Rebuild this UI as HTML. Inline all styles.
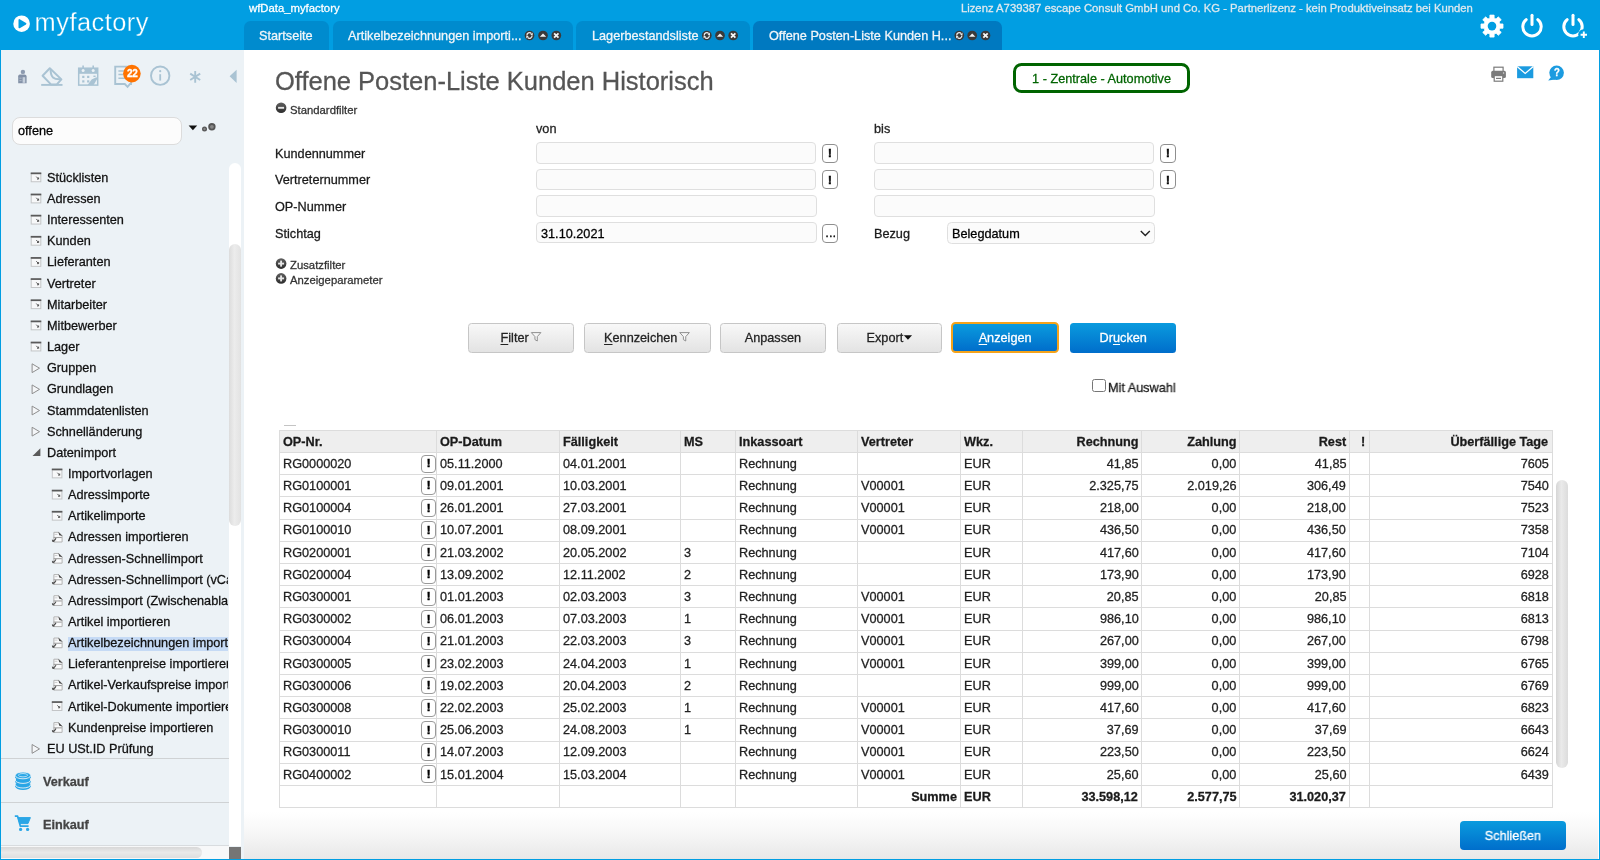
<!DOCTYPE html>
<html lang="de"><head><meta charset="utf-8"><title>myfactory</title>
<style>
html,body{margin:0;padding:0;}
body{width:1600px;height:860px;overflow:hidden;position:relative;background:#fff;font-family:"Liberation Sans",sans-serif;font-size:13px;color:#222;-webkit-text-stroke:0.28px;}
div,span{box-sizing:border-box;}
svg{position:absolute;overflow:visible;}
.gbtn{position:absolute;border:1px solid #c6c6c6;border-radius:3.5px;background:linear-gradient(#f8f8f8,#e3e3e3);text-align:center;color:#222;font-size:13px;}
.bbtn{position:absolute;border-radius:3.5px;background:linear-gradient(#0a9bde,#006ecb);text-align:center;color:#fff;font-size:13px;}
.ex{position:absolute;border:1px solid #8f8f8f;border-radius:4px;background:#fff;}
.inp{position:absolute;border:1px solid #dfdfdf;border-radius:4px;background:#fbfbfb;}
.sx{display:inline-block;transform:scaleX(0.976);}
u{text-decoration:underline;text-underline-offset:1.5px;}
</style></head><body><div id="root" style="position:absolute;left:0;top:0;width:1600px;height:860px;overflow:hidden;will-change:transform;">
<div style="position:absolute;left:0.00px;top:0.00px;width:1600.00px;height:49.60px;box-sizing:border-box;background:#019ee2;"></div>
<div style="position:absolute;left:0.00px;top:49.00px;width:1.30px;height:811.00px;box-sizing:border-box;background:#019ee2;"></div>
<div style="position:absolute;left:1598.60px;top:49.00px;width:1.40px;height:811.00px;box-sizing:border-box;background:#019ee2;"></div>
<svg style="left:0;top:0" width="60" height="50" viewBox="0 0 60 50"><circle cx="21.6" cy="23.7" r="8.3" fill="#fff"/><path d="M19.3 19.9 L19.3 27.5 L25.6 23.7 Z" fill="#019ee2" stroke="#019ee2" stroke-width="1.6" stroke-linejoin="round"/></svg>
<div style="position:absolute;top:5.00px;line-height:34px;font-size:25.4px;color:#fff;white-space:pre;left:34.60px;-webkit-text-stroke:0.3px #019ee2;letter-spacing:0.47px;">myfactory</div>
<div style="position:absolute;top:0.98px;line-height:14px;font-size:11.6px;color:#fff;white-space:pre;left:248.60px;transform:scaleX(0.976);transform-origin:left center;">wfData_myfactory</div>
<div style="position:absolute;top:0.98px;line-height:14px;font-size:11.6px;color:#dfe9ee;white-space:pre;right:126.70px;transform:scaleX(0.9735);transform-origin:right center;">Lizenz A739387 escape Consult GmbH und Co. KG - Partnerlizenz - kein Produktiveinsatz bei Kunden</div>
<div style="position:absolute;left:243.80px;top:21.00px;width:85.00px;height:28.60px;box-sizing:border-box;background:#008bce;border-radius:6.5px 6.5px 0 0;"></div>
<div style="position:absolute;top:27.50px;line-height:16px;font-size:13.0px;color:#f2f6f9;white-space:pre;left:259.30px;transform:scaleX(0.976);transform-origin:left center;">Startseite</div>
<div style="position:absolute;left:332.50px;top:21.00px;width:240.00px;height:28.60px;box-sizing:border-box;background:#008bce;border-radius:6.5px 6.5px 0 0;"></div>
<div style="position:absolute;top:27.50px;line-height:16px;font-size:13.0px;color:#f2f6f9;white-space:pre;left:347.90px;transform:scaleX(0.976);transform-origin:left center;">Artikelbezeichnungen importi...</div>
<div style="position:absolute;left:576.20px;top:21.00px;width:173.40px;height:28.60px;box-sizing:border-box;background:#008bce;border-radius:6.5px 6.5px 0 0;"></div>
<div style="position:absolute;top:27.50px;line-height:16px;font-size:13.0px;color:#f2f6f9;white-space:pre;left:591.90px;transform:scaleX(0.976);transform-origin:left center;">Lagerbestandsliste</div>
<div style="position:absolute;left:752.80px;top:21.00px;width:249.20px;height:28.60px;box-sizing:border-box;background:#0079c0;border-radius:6.5px 6.5px 0 0;"></div>
<div style="position:absolute;top:27.50px;line-height:16px;font-size:13.0px;color:#f2f6f9;white-space:pre;left:768.60px;transform:scaleX(0.976);transform-origin:left center;">Offene Posten-Liste Kunden H...</div>
<svg style="left:0;top:0" width="1100" height="50" viewBox="0 0 1100 50"><circle cx="529.5" cy="35.5" r="4.85" fill="#3a3a3a"/><path d="M531.40 33.60 A2.5 2.5 0 0 0 527.00 35.60 M527.60 37.40 A2.5 2.5 0 0 0 532.00 35.40" stroke="#ededed" stroke-width="1.3" fill="none"/><path d="M532.70 32.40 v2.5 h-2.5z M526.30 38.60 v-2.5 h2.5z" fill="#ededed"/><circle cx="543.0" cy="35.5" r="4.85" fill="#3a3a3a"/><path d="M539.80 36.70 L543.00 33.50 L546.20 36.70 Z" fill="#f4f4f4"/><circle cx="556.3" cy="35.5" r="4.85" fill="#3a3a3a"/><path d="M554.10 33.30 L558.50 37.70 M558.50 33.30 L554.10 37.70" stroke="#f6f6f6" stroke-width="1.75" fill="none"/><circle cx="706.8" cy="35.5" r="4.85" fill="#3a3a3a"/><path d="M708.70 33.60 A2.5 2.5 0 0 0 704.30 35.60 M704.90 37.40 A2.5 2.5 0 0 0 709.30 35.40" stroke="#ededed" stroke-width="1.3" fill="none"/><path d="M710.00 32.40 v2.5 h-2.5z M703.60 38.60 v-2.5 h2.5z" fill="#ededed"/><circle cx="720.0" cy="35.5" r="4.85" fill="#3a3a3a"/><path d="M716.80 36.70 L720.00 33.50 L723.20 36.70 Z" fill="#f4f4f4"/><circle cx="733.2" cy="35.5" r="4.85" fill="#3a3a3a"/><path d="M731.00 33.30 L735.40 37.70 M735.40 33.30 L731.00 37.70" stroke="#f6f6f6" stroke-width="1.75" fill="none"/><circle cx="959.3" cy="35.5" r="4.85" fill="#3a3a3a"/><path d="M961.20 33.60 A2.5 2.5 0 0 0 956.80 35.60 M957.40 37.40 A2.5 2.5 0 0 0 961.80 35.40" stroke="#ededed" stroke-width="1.3" fill="none"/><path d="M962.50 32.40 v2.5 h-2.5z M956.10 38.60 v-2.5 h2.5z" fill="#ededed"/><circle cx="972.2" cy="35.5" r="4.85" fill="#3a3a3a"/><path d="M969.00 36.70 L972.20 33.50 L975.40 36.70 Z" fill="#f4f4f4"/><circle cx="985.5" cy="35.5" r="4.85" fill="#3a3a3a"/><path d="M983.30 33.30 L987.70 37.70 M987.70 33.30 L983.30 37.70" stroke="#f6f6f6" stroke-width="1.75" fill="none"/></svg>
<svg style="left:0;top:0" width="1600" height="50" viewBox="0 0 1600 50"><g transform="translate(1492,26.1)"><polygon points="-2.12,-11.00 2.12,-11.00 2.11,-7.92 4.11,-7.09 6.28,-9.27 9.27,-6.28 7.09,-4.11 7.92,-2.11 11.00,-2.12 11.00,2.12 7.92,2.11 7.09,4.11 9.27,6.28 6.28,9.27 4.11,7.09 2.11,7.92 2.12,11.00 -2.12,11.00 -2.11,7.92 -4.11,7.09 -6.28,9.27 -9.27,6.28 -7.09,4.11 -7.92,2.11 -11.00,2.12 -11.00,-2.12 -7.92,-2.11 -7.09,-4.11 -9.27,-6.28 -6.28,-9.27 -4.11,-7.09 -2.11,-7.92" fill="#fff" stroke="#fff" stroke-width="0.8" stroke-linejoin="round"/><circle r="4.3" fill="#019ee2"/></g><g fill="none" stroke="#fff" stroke-width="3" stroke-linecap="round"><path d="M1526.2 19.6 A9.2 9.2 0 1 0 1537.8 19.6"/><path d="M1532 15.2 V24.6"/><path d="M1567.2 19.6 A9.2 9.2 0 1 0 1578.8 19.6" /><path d="M1573 15.2 V24.6"/></g><circle cx="1583.6" cy="34.6" r="5.4" fill="#019ee2"/><path d="M1580.6 34.8 H1587 M1583.8 31.6 V38" stroke="#fff" stroke-width="1.9" fill="none"/></svg>
<div style="position:absolute;left:1.30px;top:49.60px;width:242.30px;height:809.40px;box-sizing:border-box;background:#ecf2f6;"></div>
<svg style="left:0;top:0" width="244" height="100" viewBox="0 0 244 100"><g><circle cx="22.9" cy="71.9" r="2.2" fill="#8d9bb0"/><path d="M18.2 76.2 q0 -1.6 1.6 -1.6 h4.6 q2.2 0 2.2 2 v6.6 h-8.4z" fill="#8391a7"/><rect x="22.6" y="77.2" width="2.6" height="5.6" fill="#c6d0dc"/><rect x="19.4" y="77.6" width="2.2" height="1.2" fill="#aab5c5"/><rect x="19.4" y="80" width="2.2" height="1.2" fill="#aab5c5"/></g><g fill="none" stroke="#a9c3d3" stroke-width="2" stroke-linejoin="round"><path d="M49.8 68.2 L42.6 75.7 L51.2 84.6 H56.6 L61.4 79.4 Z"/><path d="M50.6 69.6 C50.6 77.2 53.6 79.6 60.6 79.2"/><path d="M41.2 84.9 H62.5" stroke-width="1.9"/></g><g><rect x="78.7" y="68.2" width="19" height="16.9" fill="none" stroke="#a9c3d3" stroke-width="1.5"/><rect x="78.7" y="68.2" width="19" height="5.6" fill="#a9c3d3"/><path d="M83.1 65.6 V70.4 M93.2 65.6 V70.4" stroke="#a9c3d3" stroke-width="1.6"/><circle cx="83.1" cy="70.6" r="1.5" fill="#ecf2f6"/><circle cx="93.2" cy="70.6" r="1.5" fill="#ecf2f6"/><rect x="82.2" y="75.80000000000001" width="2.2" height="2.2" fill="#a9c3d3"/><rect x="87.10000000000001" y="75.80000000000001" width="2.2" height="2.2" fill="#a9c3d3"/><rect x="82.2" y="80.30000000000001" width="2.2" height="2.2" fill="#a9c3d3"/><rect x="87.10000000000001" y="80.30000000000001" width="2.2" height="2.2" fill="#a9c3d3"/><path d="M93.4 76.3 h2.2" stroke="#a9c3d3" stroke-width="1.4"/><path d="M87.6 85.1 L91.6 79.4 L96.4 77.2 L97.6 78.2 L93.6 85.1 Z" fill="#a9c3d3"/></g><g><path d="M115.2 66.6 H131 V84 H130 L127.6 86.8 L124.8 84 H115.2 Z" fill="none" stroke="#a9c3d3" stroke-width="1.9"/><path d="M118.4 71 H128 M118.4 74.6 H128 M118.4 78.2 H128" stroke="#a9c3d3" stroke-width="1.5"/></g><circle cx="131.9" cy="73.6" r="8.8" fill="#ff7300"/><circle cx="160.2" cy="75.7" r="9.2" fill="none" stroke="#a9c3d3" stroke-width="1.9"/><circle cx="160.2" cy="71.2" r="1.1" fill="#a9c3d3"/><path d="M160.2 74.2 V80.6" stroke="#a9c3d3" stroke-width="1.8"/><path d="M195.2 70.9 V82.7 M190.2 73.6 L200.2 80 M200.2 73.6 L190.2 80" stroke="#a9c3d3" stroke-width="1.9" fill="none"/><path d="M236.6 69.8 V82.9 L229.6 76.3 Z" fill="#a9c3d3"/></svg>
<div style="position:absolute;top:67.77px;line-height:12px;font-size:10.2px;color:#fff;white-space:pre;font-weight:700;left:126.60px;transform:scaleX(0.976);transform-origin:left center;letter-spacing:-0.3px;">22</div>
<div style="position:absolute;left:12.20px;top:117.00px;width:169.40px;height:28.00px;box-sizing:border-box;background:#fcfcfc;border:1px solid #dcdcdc;border-radius:8px;"></div>
<div style="position:absolute;top:122.00px;line-height:17px;font-size:13.0px;color:#000;white-space:pre;left:18.00px;transform:scaleX(0.976);transform-origin:left center;">offene</div>
<svg style="left:0;top:100px" width="244" height="60" viewBox="0 100 244 60"><path d="M188.6 125.4 H197.2 L192.9 130.2 Z" fill="#111"/><circle cx="204.5" cy="129.0" r="2.5" fill="#555"/><circle cx="211.9" cy="126.8" r="3.7" fill="#555"/><circle cx="204.5" cy="129.0" r="1.2" fill="#888"/><circle cx="211.9" cy="126.8" r="1.9" fill="#888"/></svg>
<div style="position:absolute;left:0;top:160px;width:228.4px;height:598px;overflow:hidden;"><div style="position:absolute;left:0;top:-160px;"><div style="position:absolute;top:169.85px;line-height:16px;font-size:13.0px;color:#111;white-space:pre;left:46.80px;transform:scaleX(0.976);transform-origin:left center;">Stücklisten</div><div style="position:absolute;top:191.00px;line-height:16px;font-size:13.0px;color:#111;white-space:pre;left:46.80px;transform:scaleX(0.976);transform-origin:left center;">Adressen</div><div style="position:absolute;top:212.15px;line-height:16px;font-size:13.0px;color:#111;white-space:pre;left:46.80px;transform:scaleX(0.976);transform-origin:left center;">Interessenten</div><div style="position:absolute;top:233.30px;line-height:16px;font-size:13.0px;color:#111;white-space:pre;left:46.80px;transform:scaleX(0.976);transform-origin:left center;">Kunden</div><div style="position:absolute;top:254.45px;line-height:16px;font-size:13.0px;color:#111;white-space:pre;left:46.80px;transform:scaleX(0.976);transform-origin:left center;">Lieferanten</div><div style="position:absolute;top:275.60px;line-height:16px;font-size:13.0px;color:#111;white-space:pre;left:46.80px;transform:scaleX(0.976);transform-origin:left center;">Vertreter</div><div style="position:absolute;top:296.75px;line-height:16px;font-size:13.0px;color:#111;white-space:pre;left:46.80px;transform:scaleX(0.976);transform-origin:left center;">Mitarbeiter</div><div style="position:absolute;top:317.90px;line-height:16px;font-size:13.0px;color:#111;white-space:pre;left:46.80px;transform:scaleX(0.976);transform-origin:left center;">Mitbewerber</div><div style="position:absolute;top:339.05px;line-height:16px;font-size:13.0px;color:#111;white-space:pre;left:46.80px;transform:scaleX(0.976);transform-origin:left center;">Lager</div><div style="position:absolute;top:360.20px;line-height:16px;font-size:13.0px;color:#111;white-space:pre;left:46.80px;transform:scaleX(0.976);transform-origin:left center;">Gruppen</div><div style="position:absolute;top:381.35px;line-height:16px;font-size:13.0px;color:#111;white-space:pre;left:46.80px;transform:scaleX(0.976);transform-origin:left center;">Grundlagen</div><div style="position:absolute;top:402.50px;line-height:16px;font-size:13.0px;color:#111;white-space:pre;left:46.80px;transform:scaleX(0.976);transform-origin:left center;">Stammdatenlisten</div><div style="position:absolute;top:423.65px;line-height:16px;font-size:13.0px;color:#111;white-space:pre;left:46.80px;transform:scaleX(0.976);transform-origin:left center;">Schnelländerung</div><div style="position:absolute;top:444.80px;line-height:16px;font-size:13.0px;color:#111;white-space:pre;left:46.80px;transform:scaleX(0.976);transform-origin:left center;">Datenimport</div><div style="position:absolute;top:465.95px;line-height:16px;font-size:13.0px;color:#111;white-space:pre;left:67.80px;transform:scaleX(0.976);transform-origin:left center;">Importvorlagen</div><div style="position:absolute;top:487.10px;line-height:16px;font-size:13.0px;color:#111;white-space:pre;left:67.80px;transform:scaleX(0.976);transform-origin:left center;">Adressimporte</div><div style="position:absolute;top:508.25px;line-height:16px;font-size:13.0px;color:#111;white-space:pre;left:67.80px;transform:scaleX(0.976);transform-origin:left center;">Artikelimporte</div><div style="position:absolute;top:529.40px;line-height:16px;font-size:13.0px;color:#111;white-space:pre;left:67.80px;transform:scaleX(0.976);transform-origin:left center;">Adressen importieren</div><div style="position:absolute;top:550.55px;line-height:16px;font-size:13.0px;color:#111;white-space:pre;left:67.80px;transform:scaleX(0.976);transform-origin:left center;">Adressen-Schnellimport</div><div style="position:absolute;top:571.70px;line-height:16px;font-size:13.0px;color:#111;white-space:pre;left:67.80px;transform:scaleX(0.976);transform-origin:left center;">Adressen-Schnellimport (vCard)</div><div style="position:absolute;top:592.85px;line-height:16px;font-size:13.0px;color:#111;white-space:pre;left:67.80px;transform:scaleX(0.976);transform-origin:left center;">Adressimport (Zwischenablage)</div><div style="position:absolute;top:614.00px;line-height:16px;font-size:13.0px;color:#111;white-space:pre;left:67.80px;transform:scaleX(0.976);transform-origin:left center;">Artikel importieren</div><div style="position:absolute;left:67.90px;top:636.55px;width:160.70px;height:14.70px;box-sizing:border-box;background:#c5daf5;"></div><div style="position:absolute;top:635.15px;line-height:16px;font-size:13.0px;color:#111;white-space:pre;left:67.80px;transform:scaleX(0.976);transform-origin:left center;">Artikelbezeichnungen importieren</div><div style="position:absolute;top:656.30px;line-height:16px;font-size:13.0px;color:#111;white-space:pre;left:67.80px;transform:scaleX(0.976);transform-origin:left center;">Lieferantenpreise importieren</div><div style="position:absolute;top:677.45px;line-height:16px;font-size:13.0px;color:#111;white-space:pre;left:67.80px;transform:scaleX(0.976);transform-origin:left center;">Artikel-Verkaufspreise importieren</div><div style="position:absolute;top:698.60px;line-height:16px;font-size:13.0px;color:#111;white-space:pre;left:67.80px;transform:scaleX(0.976);transform-origin:left center;">Artikel-Dokumente importieren</div><div style="position:absolute;top:719.75px;line-height:16px;font-size:13.0px;color:#111;white-space:pre;left:67.80px;transform:scaleX(0.976);transform-origin:left center;">Kundenpreise importieren</div><div style="position:absolute;top:740.90px;line-height:16px;font-size:13.0px;color:#111;white-space:pre;left:46.80px;transform:scaleX(0.976);transform-origin:left center;">EU USt.ID Prüfung</div><svg style="left:0;top:160px" width="229" height="600" viewBox="0 160 229 600"><g transform="translate(30.70,172.45)"><rect x="0.5" y="1.3" width="9.6" height="8" fill="#f7f8f9" stroke="#c3c5c7" stroke-width="1"/><rect x="0" y="0" width="10.6" height="1.7" fill="#5a5a5a"/><path d="M5.6 4.2 L7.9 6.6 M7.9 6.6 V5 M7.9 6.6 H6.3" stroke="#555" stroke-width="1" fill="none"/></g><g transform="translate(30.70,193.60)"><rect x="0.5" y="1.3" width="9.6" height="8" fill="#f7f8f9" stroke="#c3c5c7" stroke-width="1"/><rect x="0" y="0" width="10.6" height="1.7" fill="#5a5a5a"/><path d="M5.6 4.2 L7.9 6.6 M7.9 6.6 V5 M7.9 6.6 H6.3" stroke="#555" stroke-width="1" fill="none"/></g><g transform="translate(30.70,214.75)"><rect x="0.5" y="1.3" width="9.6" height="8" fill="#f7f8f9" stroke="#c3c5c7" stroke-width="1"/><rect x="0" y="0" width="10.6" height="1.7" fill="#5a5a5a"/><path d="M5.6 4.2 L7.9 6.6 M7.9 6.6 V5 M7.9 6.6 H6.3" stroke="#555" stroke-width="1" fill="none"/></g><g transform="translate(30.70,235.90)"><rect x="0.5" y="1.3" width="9.6" height="8" fill="#f7f8f9" stroke="#c3c5c7" stroke-width="1"/><rect x="0" y="0" width="10.6" height="1.7" fill="#5a5a5a"/><path d="M5.6 4.2 L7.9 6.6 M7.9 6.6 V5 M7.9 6.6 H6.3" stroke="#555" stroke-width="1" fill="none"/></g><g transform="translate(30.70,257.05)"><rect x="0.5" y="1.3" width="9.6" height="8" fill="#f7f8f9" stroke="#c3c5c7" stroke-width="1"/><rect x="0" y="0" width="10.6" height="1.7" fill="#5a5a5a"/><path d="M5.6 4.2 L7.9 6.6 M7.9 6.6 V5 M7.9 6.6 H6.3" stroke="#555" stroke-width="1" fill="none"/></g><g transform="translate(30.70,278.20)"><rect x="0.5" y="1.3" width="9.6" height="8" fill="#f7f8f9" stroke="#c3c5c7" stroke-width="1"/><rect x="0" y="0" width="10.6" height="1.7" fill="#5a5a5a"/><path d="M5.6 4.2 L7.9 6.6 M7.9 6.6 V5 M7.9 6.6 H6.3" stroke="#555" stroke-width="1" fill="none"/></g><g transform="translate(30.70,299.35)"><rect x="0.5" y="1.3" width="9.6" height="8" fill="#f7f8f9" stroke="#c3c5c7" stroke-width="1"/><rect x="0" y="0" width="10.6" height="1.7" fill="#5a5a5a"/><path d="M5.6 4.2 L7.9 6.6 M7.9 6.6 V5 M7.9 6.6 H6.3" stroke="#555" stroke-width="1" fill="none"/></g><g transform="translate(30.70,320.50)"><rect x="0.5" y="1.3" width="9.6" height="8" fill="#f7f8f9" stroke="#c3c5c7" stroke-width="1"/><rect x="0" y="0" width="10.6" height="1.7" fill="#5a5a5a"/><path d="M5.6 4.2 L7.9 6.6 M7.9 6.6 V5 M7.9 6.6 H6.3" stroke="#555" stroke-width="1" fill="none"/></g><g transform="translate(30.70,341.65)"><rect x="0.5" y="1.3" width="9.6" height="8" fill="#f7f8f9" stroke="#c3c5c7" stroke-width="1"/><rect x="0" y="0" width="10.6" height="1.7" fill="#5a5a5a"/><path d="M5.6 4.2 L7.9 6.6 M7.9 6.6 V5 M7.9 6.6 H6.3" stroke="#555" stroke-width="1" fill="none"/></g><path d="M32.10 363.80 V372.60 L39.50 368.20 Z" fill="#f4f6f8" stroke="#8e8e8e" stroke-width="1" stroke-linejoin="round"/><path d="M32.10 384.95 V393.75 L39.50 389.35 Z" fill="#f4f6f8" stroke="#8e8e8e" stroke-width="1" stroke-linejoin="round"/><path d="M32.10 406.10 V414.90 L39.50 410.50 Z" fill="#f4f6f8" stroke="#8e8e8e" stroke-width="1" stroke-linejoin="round"/><path d="M32.10 427.25 V436.05 L39.50 431.65 Z" fill="#f4f6f8" stroke="#8e8e8e" stroke-width="1" stroke-linejoin="round"/><path d="M32.50 456.00 H40.40 V448.30 Z" fill="#5a5a5a"/><g transform="translate(51.80,468.55)"><rect x="0.5" y="1.3" width="9.6" height="8" fill="#f7f8f9" stroke="#c3c5c7" stroke-width="1"/><rect x="0" y="0" width="10.6" height="1.7" fill="#5a5a5a"/><path d="M5.6 4.2 L7.9 6.6 M7.9 6.6 V5 M7.9 6.6 H6.3" stroke="#555" stroke-width="1" fill="none"/></g><g transform="translate(51.80,489.70)"><rect x="0.5" y="1.3" width="9.6" height="8" fill="#f7f8f9" stroke="#c3c5c7" stroke-width="1"/><rect x="0" y="0" width="10.6" height="1.7" fill="#5a5a5a"/><path d="M5.6 4.2 L7.9 6.6 M7.9 6.6 V5 M7.9 6.6 H6.3" stroke="#555" stroke-width="1" fill="none"/></g><g transform="translate(51.80,510.85)"><rect x="0.5" y="1.3" width="9.6" height="8" fill="#f7f8f9" stroke="#c3c5c7" stroke-width="1"/><rect x="0" y="0" width="10.6" height="1.7" fill="#5a5a5a"/><path d="M5.6 4.2 L7.9 6.6 M7.9 6.6 V5 M7.9 6.6 H6.3" stroke="#555" stroke-width="1" fill="none"/></g><g transform="translate(52.00,531.40)"><path d="M1.9 0.9 H6.6 L10.1 4.4 V10.6 H1.9 Z" fill="#fafbfc" stroke="#b2b2b2" stroke-width="1"/><path d="M6.3 0.4 L10.6 4.7 L7.2 3.9 Z" fill="#4a4a4a"/><path d="M2.4 3 H5.4" stroke="#c8c8c8" stroke-width="0.9"/><path d="M1.6 6.1 H9.8" stroke="#a0a0a0" stroke-width="1.1"/><path d="M4 6.8 Q3.2 8.8 0.8 9.9" stroke="#4a4a4a" stroke-width="1.05" fill="none"/><path d="M0.4 8.3 L0.6 10.1 L2.4 10.2" stroke="#4a4a4a" fill="none" stroke-width="0.9"/></g><g transform="translate(52.00,552.55)"><path d="M1.9 0.9 H6.6 L10.1 4.4 V10.6 H1.9 Z" fill="#fafbfc" stroke="#b2b2b2" stroke-width="1"/><path d="M6.3 0.4 L10.6 4.7 L7.2 3.9 Z" fill="#4a4a4a"/><path d="M2.4 3 H5.4" stroke="#c8c8c8" stroke-width="0.9"/><path d="M1.6 6.1 H9.8" stroke="#a0a0a0" stroke-width="1.1"/><path d="M4 6.8 Q3.2 8.8 0.8 9.9" stroke="#4a4a4a" stroke-width="1.05" fill="none"/><path d="M0.4 8.3 L0.6 10.1 L2.4 10.2" stroke="#4a4a4a" fill="none" stroke-width="0.9"/></g><g transform="translate(52.00,573.70)"><path d="M1.9 0.9 H6.6 L10.1 4.4 V10.6 H1.9 Z" fill="#fafbfc" stroke="#b2b2b2" stroke-width="1"/><path d="M6.3 0.4 L10.6 4.7 L7.2 3.9 Z" fill="#4a4a4a"/><path d="M2.4 3 H5.4" stroke="#c8c8c8" stroke-width="0.9"/><path d="M1.6 6.1 H9.8" stroke="#a0a0a0" stroke-width="1.1"/><path d="M4 6.8 Q3.2 8.8 0.8 9.9" stroke="#4a4a4a" stroke-width="1.05" fill="none"/><path d="M0.4 8.3 L0.6 10.1 L2.4 10.2" stroke="#4a4a4a" fill="none" stroke-width="0.9"/></g><g transform="translate(52.00,594.85)"><path d="M1.9 0.9 H6.6 L10.1 4.4 V10.6 H1.9 Z" fill="#fafbfc" stroke="#b2b2b2" stroke-width="1"/><path d="M6.3 0.4 L10.6 4.7 L7.2 3.9 Z" fill="#4a4a4a"/><path d="M2.4 3 H5.4" stroke="#c8c8c8" stroke-width="0.9"/><path d="M1.6 6.1 H9.8" stroke="#a0a0a0" stroke-width="1.1"/><path d="M4 6.8 Q3.2 8.8 0.8 9.9" stroke="#4a4a4a" stroke-width="1.05" fill="none"/><path d="M0.4 8.3 L0.6 10.1 L2.4 10.2" stroke="#4a4a4a" fill="none" stroke-width="0.9"/></g><g transform="translate(52.00,616.00)"><path d="M1.9 0.9 H6.6 L10.1 4.4 V10.6 H1.9 Z" fill="#fafbfc" stroke="#b2b2b2" stroke-width="1"/><path d="M6.3 0.4 L10.6 4.7 L7.2 3.9 Z" fill="#4a4a4a"/><path d="M2.4 3 H5.4" stroke="#c8c8c8" stroke-width="0.9"/><path d="M1.6 6.1 H9.8" stroke="#a0a0a0" stroke-width="1.1"/><path d="M4 6.8 Q3.2 8.8 0.8 9.9" stroke="#4a4a4a" stroke-width="1.05" fill="none"/><path d="M0.4 8.3 L0.6 10.1 L2.4 10.2" stroke="#4a4a4a" fill="none" stroke-width="0.9"/></g><g transform="translate(52.00,637.15)"><path d="M1.9 0.9 H6.6 L10.1 4.4 V10.6 H1.9 Z" fill="#fafbfc" stroke="#b2b2b2" stroke-width="1"/><path d="M6.3 0.4 L10.6 4.7 L7.2 3.9 Z" fill="#4a4a4a"/><path d="M2.4 3 H5.4" stroke="#c8c8c8" stroke-width="0.9"/><path d="M1.6 6.1 H9.8" stroke="#a0a0a0" stroke-width="1.1"/><path d="M4 6.8 Q3.2 8.8 0.8 9.9" stroke="#4a4a4a" stroke-width="1.05" fill="none"/><path d="M0.4 8.3 L0.6 10.1 L2.4 10.2" stroke="#4a4a4a" fill="none" stroke-width="0.9"/></g><g transform="translate(52.00,658.30)"><path d="M1.9 0.9 H6.6 L10.1 4.4 V10.6 H1.9 Z" fill="#fafbfc" stroke="#b2b2b2" stroke-width="1"/><path d="M6.3 0.4 L10.6 4.7 L7.2 3.9 Z" fill="#4a4a4a"/><path d="M2.4 3 H5.4" stroke="#c8c8c8" stroke-width="0.9"/><path d="M1.6 6.1 H9.8" stroke="#a0a0a0" stroke-width="1.1"/><path d="M4 6.8 Q3.2 8.8 0.8 9.9" stroke="#4a4a4a" stroke-width="1.05" fill="none"/><path d="M0.4 8.3 L0.6 10.1 L2.4 10.2" stroke="#4a4a4a" fill="none" stroke-width="0.9"/></g><g transform="translate(52.00,679.45)"><path d="M1.9 0.9 H6.6 L10.1 4.4 V10.6 H1.9 Z" fill="#fafbfc" stroke="#b2b2b2" stroke-width="1"/><path d="M6.3 0.4 L10.6 4.7 L7.2 3.9 Z" fill="#4a4a4a"/><path d="M2.4 3 H5.4" stroke="#c8c8c8" stroke-width="0.9"/><path d="M1.6 6.1 H9.8" stroke="#a0a0a0" stroke-width="1.1"/><path d="M4 6.8 Q3.2 8.8 0.8 9.9" stroke="#4a4a4a" stroke-width="1.05" fill="none"/><path d="M0.4 8.3 L0.6 10.1 L2.4 10.2" stroke="#4a4a4a" fill="none" stroke-width="0.9"/></g><g transform="translate(51.80,701.20)"><rect x="0.5" y="1.3" width="9.6" height="8" fill="#f7f8f9" stroke="#c3c5c7" stroke-width="1"/><rect x="0" y="0" width="10.6" height="1.7" fill="#5a5a5a"/><path d="M5.6 4.2 L7.9 6.6 M7.9 6.6 V5 M7.9 6.6 H6.3" stroke="#555" stroke-width="1" fill="none"/></g><g transform="translate(52.00,721.75)"><path d="M1.9 0.9 H6.6 L10.1 4.4 V10.6 H1.9 Z" fill="#fafbfc" stroke="#b2b2b2" stroke-width="1"/><path d="M6.3 0.4 L10.6 4.7 L7.2 3.9 Z" fill="#4a4a4a"/><path d="M2.4 3 H5.4" stroke="#c8c8c8" stroke-width="0.9"/><path d="M1.6 6.1 H9.8" stroke="#a0a0a0" stroke-width="1.1"/><path d="M4 6.8 Q3.2 8.8 0.8 9.9" stroke="#4a4a4a" stroke-width="1.05" fill="none"/><path d="M0.4 8.3 L0.6 10.1 L2.4 10.2" stroke="#4a4a4a" fill="none" stroke-width="0.9"/></g><path d="M32.10 744.50 V753.30 L39.50 748.90 Z" fill="#f4f6f8" stroke="#8e8e8e" stroke-width="1" stroke-linejoin="round"/></svg></div></div>
<div style="position:absolute;left:228.60px;top:162.60px;width:12.70px;height:683.40px;box-sizing:border-box;background:#fff;border-radius:6.3px 6.3px 0 0;"></div>
<div style="position:absolute;left:228.60px;top:244.20px;width:12.70px;height:281.40px;box-sizing:border-box;background:linear-gradient(90deg,#dcdcdc,#ececec 45%,#e2e2e2);border-radius:6.3px;"></div>
<div style="position:absolute;left:1.30px;top:758.30px;width:227.50px;height:1.10px;box-sizing:border-box;background:#cfd2d4;"></div>
<div style="position:absolute;left:1.30px;top:802.10px;width:227.50px;height:1.10px;box-sizing:border-box;background:#cfd2d4;"></div>
<div style="position:absolute;left:1.30px;top:845.40px;width:227.50px;height:0.90px;box-sizing:border-box;background:#d8dcdf;"></div>
<div style="position:absolute;top:773.60px;line-height:16px;font-size:13.0px;color:#444;white-space:pre;font-weight:700;left:42.60px;transform:scaleX(0.976);transform-origin:left center;">Verkauf</div>
<div style="position:absolute;top:816.80px;line-height:16px;font-size:13.0px;color:#444;white-space:pre;font-weight:700;left:42.60px;transform:scaleX(0.976);transform-origin:left center;">Einkauf</div>
<svg style="left:0;top:760px" width="244" height="100" viewBox="0 760 244 100"><ellipse cx="23" cy="786.5" rx="7.7" ry="3.4" fill="#29a6e6"/><rect x="15.3" y="784.6" width="15.4" height="1.9" fill="#29a6e6"/><ellipse cx="23" cy="784.6" rx="7.7" ry="3.4" fill="#29a6e6" stroke="#ecf2f6" stroke-width="0.9"/><ellipse cx="23" cy="781.9" rx="7.7" ry="3.4" fill="#29a6e6"/><rect x="15.3" y="780.0" width="15.4" height="1.9" fill="#29a6e6"/><ellipse cx="23" cy="780.0" rx="7.7" ry="3.4" fill="#29a6e6" stroke="#ecf2f6" stroke-width="0.9"/><ellipse cx="23" cy="777.3" rx="7.7" ry="3.4" fill="#29a6e6"/><rect x="15.3" y="775.4" width="15.4" height="1.9" fill="#29a6e6"/><ellipse cx="23" cy="775.4" rx="7.7" ry="3.4" fill="#29a6e6" stroke="#ecf2f6" stroke-width="0.9"/><ellipse cx="23" cy="775.2" rx="4.6" ry="1.7" fill="none" stroke="#bfe4f7" stroke-width="0.9"/><path d="M14.8 816.2 H17.6 L20.4 826.2 H28.6" fill="none" stroke="#29a6e6" stroke-width="1.7" stroke-linejoin="round"/><path d="M18 817.6 H30.4 L28 823.6 H19.8 Z" fill="#29a6e6" stroke="#29a6e6" stroke-width="1" stroke-linejoin="round"/><circle cx="20.6" cy="829.4" r="1.6" fill="#29a6e6"/><circle cx="27.6" cy="829.4" r="1.6" fill="#29a6e6"/></svg>
<div style="position:absolute;left:1.30px;top:846.30px;width:227.50px;height:12.70px;box-sizing:border-box;background:#f7f8f9;"></div>
<div style="position:absolute;left:1.30px;top:847.40px;width:200.50px;height:10.80px;box-sizing:border-box;background:linear-gradient(#d8d8d8,#e9e9e9 50%,#dedede);border-radius:0 5.4px 5.4px 0;"></div>
<div style="position:absolute;left:229.00px;top:847.30px;width:12.20px;height:11.70px;box-sizing:border-box;background:#757575;"></div>
<div style="position:absolute;left:243.60px;top:812.00px;width:1354.40px;height:47.00px;box-sizing:border-box;background:linear-gradient(#ffffff,#f8f8f8 38%,#e8e8e8);"></div>
<div style="position:absolute;left:0.00px;top:858.60px;width:1600.00px;height:1.40px;box-sizing:border-box;background:#019ee2;"></div>
<div style="position:absolute;top:64.79px;line-height:32px;font-size:26px;color:#555;white-space:pre;left:275.00px;transform:scaleX(0.98);transform-origin:left center;">Offene Posten-Liste Kunden Historisch</div>
<div style="position:absolute;left:1013.10px;top:62.80px;width:177.10px;height:30.30px;box-sizing:border-box;border:3px solid #006400;border-radius:8.5px;background:#fff;"></div>
<div style="position:absolute;top:70.60px;line-height:16px;font-size:13.0px;color:#006400;white-space:pre;left:1013.10px;width:177.10px;text-align:center;transform:scaleX(0.976);transform-origin:center center;">1 - Zentrale - Automotive</div>
<svg style="left:0;top:50px" width="1600" height="50" viewBox="0 50 1600 50"><rect x="1493.9" y="67.2" width="9.2" height="4.4" fill="#fff" stroke="#7b7b7b" stroke-width="1.2"/><rect x="1491.2" y="70.8" width="14.7" height="7.2" rx="1.6" fill="#7b7b7b"/><rect x="1494.2" y="75.6" width="8.6" height="5.6" fill="#fff" stroke="#7b7b7b" stroke-width="1.2"/><path d="M1496 78.4 H1501" stroke="#7b7b7b" stroke-width="1.2"/><circle cx="1503.6" cy="73" r="0.7" fill="#ddd"/><rect x="1517.1" y="66.3" width="16.2" height="11.9" fill="#1b9be0"/><path d="M1517.1 66.6 L1525.2 73.4 L1533.3 66.6" fill="none" stroke="#fff" stroke-width="1.3"/><circle cx="1556.6" cy="72.8" r="7.3" fill="#1b9be0"/><path d="M1551.4 76.4 L1548.2 80.4 L1555.4 79.6 Z" fill="#1b9be0"/></svg>
<div style="position:absolute;top:67.10px;line-height:12px;font-size:10.4px;color:#fff;white-space:pre;font-weight:700;left:1553.90px;transform:scaleX(0.92);transform-origin:left center;">?</div>
<svg style="left:0;top:100px" width="400" height="200" viewBox="0 100 400 200"><defs><linearGradient id="cg" x1="0" y1="0" x2="0" y2="1"><stop offset="0" stop-color="#606060"/><stop offset="1" stop-color="#2c2c2c"/></linearGradient></defs><circle cx="281.1" cy="107.8" r="5.3" fill="url(#cg)"/><path d="M278.1 107.8 H284.1" stroke="#e6e6e6" stroke-width="1.9"/><circle cx="281.1" cy="263.6" r="5.3" fill="url(#cg)"/><path d="M278.1 263.6 H284.1" stroke="#e6e6e6" stroke-width="1.9"/><path d="M281.1 260.6 V266.6" stroke="#e6e6e6" stroke-width="1.9"/><circle cx="281.1" cy="278.4" r="5.3" fill="url(#cg)"/><path d="M278.1 278.4 H284.1" stroke="#e6e6e6" stroke-width="1.9"/><path d="M281.1 275.4 V281.4" stroke="#e6e6e6" stroke-width="1.9"/></svg>
<div style="position:absolute;top:102.68px;line-height:14px;font-size:11.6px;color:#333;white-space:pre;left:290.30px;transform:scaleX(0.976);transform-origin:left center;">Standardfilter</div>
<div style="position:absolute;top:258.38px;line-height:14px;font-size:11.6px;color:#333;white-space:pre;left:290.30px;transform:scaleX(0.976);transform-origin:left center;">Zusatzfilter</div>
<div style="position:absolute;top:272.98px;line-height:14px;font-size:11.6px;color:#333;white-space:pre;left:290.30px;transform:scaleX(0.976);transform-origin:left center;">Anzeigeparameter</div>
<div style="position:absolute;top:119.50px;line-height:17px;font-size:13.0px;color:#222;white-space:pre;left:535.90px;transform:scaleX(0.976);transform-origin:left center;">von</div>
<div style="position:absolute;top:119.50px;line-height:17px;font-size:13.0px;color:#222;white-space:pre;left:873.90px;transform:scaleX(0.976);transform-origin:left center;">bis</div>
<div style="position:absolute;top:144.85px;line-height:17px;font-size:13.0px;color:#1a1a1a;white-space:pre;left:275.40px;transform:scaleX(0.976);transform-origin:left center;">Kundennummer</div>
<div class="inp" style="left:536px;top:142px;width:280px;height:22px"></div>
<div class="inp" style="left:874px;top:142px;width:280px;height:22px"></div>
<div style="position:absolute;top:171.45px;line-height:17px;font-size:13.0px;color:#1a1a1a;white-space:pre;left:275.40px;transform:scaleX(0.976);transform-origin:left center;">Vertreternummer</div>
<div class="inp" style="left:536px;top:169px;width:280px;height:21px"></div>
<div class="inp" style="left:874px;top:169px;width:280px;height:21px"></div>
<div style="position:absolute;top:197.95px;line-height:17px;font-size:13.0px;color:#1a1a1a;white-space:pre;left:275.40px;transform:scaleX(0.976);transform-origin:left center;">OP-Nummer</div>
<div class="inp" style="left:536px;top:195px;width:281px;height:22px"></div>
<div class="inp" style="left:874px;top:195px;width:281px;height:22px"></div>
<div style="position:absolute;top:224.55px;line-height:17px;font-size:13.0px;color:#1a1a1a;white-space:pre;left:275.40px;transform:scaleX(0.976);transform-origin:left center;">Stichtag</div>
<div class="inp" style="left:536px;top:222px;width:281px;height:21px"></div>
<div style="position:absolute;top:225.00px;line-height:17px;font-size:13.0px;color:#000;white-space:pre;left:540.60px;transform:scaleX(0.976);transform-origin:left center;">31.10.2021</div>
<div class="ex" style="left:822.3px;top:144px;width:16px;height:18.5px"></div>
<div style="position:absolute;top:146.02px;line-height:15px;font-size:11.5px;color:#000;white-space:pre;font-weight:700;left:822.30px;width:16.00px;text-align:center;transform:scaleX(0.976);transform-origin:center center;-webkit-text-stroke:0.55px;">!</div>
<div class="ex" style="left:1160.0px;top:144px;width:16px;height:18.5px"></div>
<div style="position:absolute;top:146.02px;line-height:15px;font-size:11.5px;color:#000;white-space:pre;font-weight:700;left:1160.00px;width:16.00px;text-align:center;transform:scaleX(0.976);transform-origin:center center;-webkit-text-stroke:0.55px;">!</div>
<div class="ex" style="left:822.3px;top:170.4px;width:16px;height:18.5px"></div>
<div style="position:absolute;top:172.62px;line-height:15px;font-size:11.5px;color:#000;white-space:pre;font-weight:700;left:822.30px;width:16.00px;text-align:center;transform:scaleX(0.976);transform-origin:center center;-webkit-text-stroke:0.55px;">!</div>
<div class="ex" style="left:1160.0px;top:170.4px;width:16px;height:18.5px"></div>
<div style="position:absolute;top:172.62px;line-height:15px;font-size:11.5px;color:#000;white-space:pre;font-weight:700;left:1160.00px;width:16.00px;text-align:center;transform:scaleX(0.976);transform-origin:center center;-webkit-text-stroke:0.55px;">!</div>
<div class="ex" style="left:822.3px;top:224px;width:16px;height:18.5px"></div>
<div style="position:absolute;top:226.12px;line-height:15px;font-size:11.5px;color:#000;white-space:pre;left:822.80px;width:16.00px;text-align:center;transform:scaleX(0.976);transform-origin:center center;letter-spacing:0.5px;-webkit-text-stroke:0.4px;">...</div>
<div style="position:absolute;top:224.80px;line-height:17px;font-size:13.0px;color:#1a1a1a;white-space:pre;left:874.00px;transform:scaleX(0.976);transform-origin:left center;">Bezug</div>
<div class="inp" style="left:947.3px;top:222.2px;width:207.8px;height:22px;border-radius:4.5px"></div>
<div style="position:absolute;top:224.80px;line-height:17px;font-size:13.0px;color:#000;white-space:pre;left:952.40px;transform:scaleX(0.976);transform-origin:left center;">Belegdatum</div>
<svg style="left:1135px;top:225px" width="20" height="16" viewBox="1135 225 20 16"><path d="M1140.8 230.9 L1145.3 235.5 L1149.8 230.9" fill="none" stroke="#222" stroke-width="1.4"/></svg>
<div class="gbtn" style="left:468.1px;top:322.5px;width:105.69999999999993px;height:30.2px;line-height:28.4px"><span class="sx"><u>F</u>ilter<svg style="position:relative;display:inline-block;vertical-align:baseline;margin-left:1.6px;top:0.6px" width="11" height="10" viewBox="0 0 11 10"><path d="M0.6 0.6 H10.4 L6.7 4.6 V9 L4.3 7.6 V4.6 Z" fill="#f6f6f6" stroke="#8a8a8a" stroke-width="0.95" stroke-linejoin="round"/></svg></span></div>
<div class="gbtn" style="left:584.0px;top:322.5px;width:126.70000000000005px;height:30.2px;line-height:28.4px"><span class="sx"><u>K</u>ennzeichen<svg style="position:relative;display:inline-block;vertical-align:baseline;margin-left:1.6px;top:0.6px" width="11" height="10" viewBox="0 0 11 10"><path d="M0.6 0.6 H10.4 L6.7 4.6 V9 L4.3 7.6 V4.6 Z" fill="#f6f6f6" stroke="#8a8a8a" stroke-width="0.95" stroke-linejoin="round"/></svg></span></div>
<div class="gbtn" style="left:720.4px;top:322.5px;width:105.60000000000002px;height:30.2px;line-height:28.4px"><span class="sx">Anpassen</span></div>
<div class="gbtn" style="left:836.6px;top:322.5px;width:105.5px;height:30.2px;line-height:28.4px"><span class="sx">Export<svg style="position:relative;display:inline-block;margin-left:0.3px;top:-1.4px" width="9" height="5" viewBox="0 0 9 5"><path d="M0.2 0.2 H8.6 L4.4 4.8 Z" fill="#111"/></svg></span></div>
<div class="bbtn" style="left:951.3px;top:322.1px;width:107.9px;height:31.4px;line-height:27.6px;border:2px solid #f5a31a;border-radius:4.5px"><span class="sx"><u>A</u>nzeigen</span></div>
<div class="bbtn" style="left:1070px;top:323px;width:106px;height:29.6px;line-height:29.6px"><span class="sx">Dr<u>u</u>cken</span></div>
<div style="position:absolute;left:1092.40px;top:378.60px;width:13.40px;height:13.40px;box-sizing:border-box;border:1px solid #767676;border-radius:2.5px;background:#fff;"></div>
<div style="position:absolute;top:379.00px;line-height:17px;font-size:13.0px;color:#1a1a1a;white-space:pre;left:1107.50px;transform:scaleX(0.976);transform-origin:left center;">Mit Auswahl</div>
<div style="position:absolute;left:284.40px;top:425.40px;width:11.60px;height:1.10px;box-sizing:border-box;background:#c4c4c4;"></div>
<div style="position:absolute;left:279.00px;top:430.00px;width:1274.00px;height:23.00px;box-sizing:border-box;background:#eeeeee;"></div>
<div style="position:absolute;left:279.00px;top:430.00px;width:1274.00px;height:1.00px;box-sizing:border-box;background:#dcdcdc;"></div>
<div style="position:absolute;left:279.00px;top:452.00px;width:1274.00px;height:1.00px;box-sizing:border-box;background:#dcdcdc;"></div>
<div style="position:absolute;left:279.00px;top:474.00px;width:1274.00px;height:1.00px;box-sizing:border-box;background:#dcdcdc;"></div>
<div style="position:absolute;left:279.00px;top:496.00px;width:1274.00px;height:1.00px;box-sizing:border-box;background:#dcdcdc;"></div>
<div style="position:absolute;left:279.00px;top:519.00px;width:1274.00px;height:1.00px;box-sizing:border-box;background:#dcdcdc;"></div>
<div style="position:absolute;left:279.00px;top:541.00px;width:1274.00px;height:1.00px;box-sizing:border-box;background:#dcdcdc;"></div>
<div style="position:absolute;left:279.00px;top:563.00px;width:1274.00px;height:1.00px;box-sizing:border-box;background:#dcdcdc;"></div>
<div style="position:absolute;left:279.00px;top:585.00px;width:1274.00px;height:1.00px;box-sizing:border-box;background:#dcdcdc;"></div>
<div style="position:absolute;left:279.00px;top:607.00px;width:1274.00px;height:1.00px;box-sizing:border-box;background:#dcdcdc;"></div>
<div style="position:absolute;left:279.00px;top:630.00px;width:1274.00px;height:1.00px;box-sizing:border-box;background:#dcdcdc;"></div>
<div style="position:absolute;left:279.00px;top:652.00px;width:1274.00px;height:1.00px;box-sizing:border-box;background:#dcdcdc;"></div>
<div style="position:absolute;left:279.00px;top:674.00px;width:1274.00px;height:1.00px;box-sizing:border-box;background:#dcdcdc;"></div>
<div style="position:absolute;left:279.00px;top:696.00px;width:1274.00px;height:1.00px;box-sizing:border-box;background:#dcdcdc;"></div>
<div style="position:absolute;left:279.00px;top:718.00px;width:1274.00px;height:1.00px;box-sizing:border-box;background:#dcdcdc;"></div>
<div style="position:absolute;left:279.00px;top:741.00px;width:1274.00px;height:1.00px;box-sizing:border-box;background:#dcdcdc;"></div>
<div style="position:absolute;left:279.00px;top:763.00px;width:1274.00px;height:1.00px;box-sizing:border-box;background:#dcdcdc;"></div>
<div style="position:absolute;left:279.00px;top:785.00px;width:1274.00px;height:1.00px;box-sizing:border-box;background:#dcdcdc;"></div>
<div style="position:absolute;left:279.00px;top:807.00px;width:1274.00px;height:1.00px;box-sizing:border-box;background:#dcdcdc;"></div>
<div style="position:absolute;left:279.00px;top:430.00px;width:1.00px;height:378.00px;box-sizing:border-box;background:#dcdcdc;"></div>
<div style="position:absolute;left:436.00px;top:430.00px;width:1.00px;height:378.00px;box-sizing:border-box;background:#dcdcdc;"></div>
<div style="position:absolute;left:559.00px;top:430.00px;width:1.00px;height:378.00px;box-sizing:border-box;background:#dcdcdc;"></div>
<div style="position:absolute;left:680.00px;top:430.00px;width:1.00px;height:378.00px;box-sizing:border-box;background:#dcdcdc;"></div>
<div style="position:absolute;left:735.00px;top:430.00px;width:1.00px;height:378.00px;box-sizing:border-box;background:#dcdcdc;"></div>
<div style="position:absolute;left:857.00px;top:430.00px;width:1.00px;height:378.00px;box-sizing:border-box;background:#dcdcdc;"></div>
<div style="position:absolute;left:960.00px;top:430.00px;width:1.00px;height:378.00px;box-sizing:border-box;background:#dcdcdc;"></div>
<div style="position:absolute;left:1022.00px;top:430.00px;width:1.00px;height:378.00px;box-sizing:border-box;background:#dcdcdc;"></div>
<div style="position:absolute;left:1141.00px;top:430.00px;width:1.00px;height:378.00px;box-sizing:border-box;background:#dcdcdc;"></div>
<div style="position:absolute;left:1239.00px;top:430.00px;width:1.00px;height:378.00px;box-sizing:border-box;background:#dcdcdc;"></div>
<div style="position:absolute;left:1349.00px;top:430.00px;width:1.00px;height:378.00px;box-sizing:border-box;background:#dcdcdc;"></div>
<div style="position:absolute;left:1369.00px;top:430.00px;width:1.00px;height:378.00px;box-sizing:border-box;background:#dcdcdc;"></div>
<div style="position:absolute;left:1552.00px;top:430.00px;width:1.00px;height:378.00px;box-sizing:border-box;background:#dcdcdc;"></div>
<div style="position:absolute;top:432.90px;line-height:17px;font-size:13.0px;color:#1a1a1a;white-space:pre;font-weight:700;left:282.70px;transform:scaleX(0.976);transform-origin:left center;">OP-Nr.</div>
<div style="position:absolute;top:432.90px;line-height:17px;font-size:13.0px;color:#1a1a1a;white-space:pre;font-weight:700;left:440.00px;transform:scaleX(0.976);transform-origin:left center;">OP-Datum</div>
<div style="position:absolute;top:432.90px;line-height:17px;font-size:13.0px;color:#1a1a1a;white-space:pre;font-weight:700;left:562.90px;transform:scaleX(0.976);transform-origin:left center;">Fälligkeit</div>
<div style="position:absolute;top:432.90px;line-height:17px;font-size:13.0px;color:#1a1a1a;white-space:pre;font-weight:700;left:684.30px;transform:scaleX(0.976);transform-origin:left center;">MS</div>
<div style="position:absolute;top:432.90px;line-height:17px;font-size:13.0px;color:#1a1a1a;white-space:pre;font-weight:700;left:738.80px;transform:scaleX(0.976);transform-origin:left center;">Inkassoart</div>
<div style="position:absolute;top:432.90px;line-height:17px;font-size:13.0px;color:#1a1a1a;white-space:pre;font-weight:700;left:861.00px;transform:scaleX(0.976);transform-origin:left center;">Vertreter</div>
<div style="position:absolute;top:432.90px;line-height:17px;font-size:13.0px;color:#1a1a1a;white-space:pre;font-weight:700;left:964.00px;transform:scaleX(0.976);transform-origin:left center;">Wkz.</div>
<div style="position:absolute;top:432.90px;line-height:17px;font-size:13.0px;color:#1a1a1a;white-space:pre;font-weight:700;right:461.70px;transform:scaleX(0.976);transform-origin:right center;">Rechnung</div>
<div style="position:absolute;top:432.90px;line-height:17px;font-size:13.0px;color:#1a1a1a;white-space:pre;font-weight:700;right:363.90px;transform:scaleX(0.976);transform-origin:right center;">Zahlung</div>
<div style="position:absolute;top:432.90px;line-height:17px;font-size:13.0px;color:#1a1a1a;white-space:pre;font-weight:700;right:253.80px;transform:scaleX(0.976);transform-origin:right center;">Rest</div>
<div style="position:absolute;top:432.90px;line-height:17px;font-size:13.0px;color:#1a1a1a;white-space:pre;font-weight:700;right:234.30px;transform:scaleX(0.976);transform-origin:right center;">!</div>
<div style="position:absolute;top:432.90px;line-height:17px;font-size:13.0px;color:#1a1a1a;white-space:pre;font-weight:700;right:51.50px;transform:scaleX(0.976);transform-origin:right center;">Überfällige Tage</div>
<div style="position:absolute;top:454.90px;line-height:17px;font-size:13.0px;color:#222;white-space:pre;left:282.70px;transform:scaleX(0.976);transform-origin:left center;">RG0000020</div>
<div style="position:absolute;top:454.90px;line-height:17px;font-size:13.0px;color:#222;white-space:pre;left:440.00px;transform:scaleX(0.976);transform-origin:left center;">05.11.2000</div>
<div style="position:absolute;top:454.90px;line-height:17px;font-size:13.0px;color:#222;white-space:pre;left:562.90px;transform:scaleX(0.976);transform-origin:left center;">04.01.2001</div>
<div style="position:absolute;top:454.90px;line-height:17px;font-size:13.0px;color:#222;white-space:pre;left:738.80px;transform:scaleX(0.976);transform-origin:left center;">Rechnung</div>
<div style="position:absolute;top:454.90px;line-height:17px;font-size:13.0px;color:#222;white-space:pre;left:964.00px;transform:scaleX(0.976);transform-origin:left center;">EUR</div>
<div style="position:absolute;top:454.90px;line-height:17px;font-size:13.0px;color:#222;white-space:pre;right:461.70px;transform:scaleX(0.976);transform-origin:right center;">41,85</div>
<div style="position:absolute;top:454.90px;line-height:17px;font-size:13.0px;color:#222;white-space:pre;right:363.90px;transform:scaleX(0.976);transform-origin:right center;">0,00</div>
<div style="position:absolute;top:454.90px;line-height:17px;font-size:13.0px;color:#222;white-space:pre;right:253.80px;transform:scaleX(0.976);transform-origin:right center;">41,85</div>
<div style="position:absolute;top:454.90px;line-height:17px;font-size:13.0px;color:#222;white-space:pre;right:51.50px;transform:scaleX(0.976);transform-origin:right center;">7605</div>
<div class="ex" style="left:420.5px;top:454.80px;width:15.3px;height:17.8px;border-color:#999"></div>
<div style="position:absolute;top:456.22px;line-height:15px;font-size:11.5px;color:#000;white-space:pre;font-weight:700;left:420.50px;width:15.30px;text-align:center;transform:scaleX(0.976);transform-origin:center center;-webkit-text-stroke:0.55px;">!</div>
<div style="position:absolute;top:477.09px;line-height:17px;font-size:13.0px;color:#222;white-space:pre;left:282.70px;transform:scaleX(0.976);transform-origin:left center;">RG0100001</div>
<div style="position:absolute;top:477.09px;line-height:17px;font-size:13.0px;color:#222;white-space:pre;left:440.00px;transform:scaleX(0.976);transform-origin:left center;">09.01.2001</div>
<div style="position:absolute;top:477.09px;line-height:17px;font-size:13.0px;color:#222;white-space:pre;left:562.90px;transform:scaleX(0.976);transform-origin:left center;">10.03.2001</div>
<div style="position:absolute;top:477.09px;line-height:17px;font-size:13.0px;color:#222;white-space:pre;left:738.80px;transform:scaleX(0.976);transform-origin:left center;">Rechnung</div>
<div style="position:absolute;top:477.09px;line-height:17px;font-size:13.0px;color:#222;white-space:pre;left:861.00px;transform:scaleX(0.976);transform-origin:left center;">V00001</div>
<div style="position:absolute;top:477.09px;line-height:17px;font-size:13.0px;color:#222;white-space:pre;left:964.00px;transform:scaleX(0.976);transform-origin:left center;">EUR</div>
<div style="position:absolute;top:477.09px;line-height:17px;font-size:13.0px;color:#222;white-space:pre;right:461.70px;transform:scaleX(0.976);transform-origin:right center;">2.325,75</div>
<div style="position:absolute;top:477.09px;line-height:17px;font-size:13.0px;color:#222;white-space:pre;right:363.90px;transform:scaleX(0.976);transform-origin:right center;">2.019,26</div>
<div style="position:absolute;top:477.09px;line-height:17px;font-size:13.0px;color:#222;white-space:pre;right:253.80px;transform:scaleX(0.976);transform-origin:right center;">306,49</div>
<div style="position:absolute;top:477.09px;line-height:17px;font-size:13.0px;color:#222;white-space:pre;right:51.50px;transform:scaleX(0.976);transform-origin:right center;">7540</div>
<div class="ex" style="left:420.5px;top:476.99px;width:15.3px;height:17.8px;border-color:#999"></div>
<div style="position:absolute;top:478.41px;line-height:15px;font-size:11.5px;color:#000;white-space:pre;font-weight:700;left:420.50px;width:15.30px;text-align:center;transform:scaleX(0.976);transform-origin:center center;-webkit-text-stroke:0.55px;">!</div>
<div style="position:absolute;top:499.28px;line-height:17px;font-size:13.0px;color:#222;white-space:pre;left:282.70px;transform:scaleX(0.976);transform-origin:left center;">RG0100004</div>
<div style="position:absolute;top:499.28px;line-height:17px;font-size:13.0px;color:#222;white-space:pre;left:440.00px;transform:scaleX(0.976);transform-origin:left center;">26.01.2001</div>
<div style="position:absolute;top:499.28px;line-height:17px;font-size:13.0px;color:#222;white-space:pre;left:562.90px;transform:scaleX(0.976);transform-origin:left center;">27.03.2001</div>
<div style="position:absolute;top:499.28px;line-height:17px;font-size:13.0px;color:#222;white-space:pre;left:738.80px;transform:scaleX(0.976);transform-origin:left center;">Rechnung</div>
<div style="position:absolute;top:499.28px;line-height:17px;font-size:13.0px;color:#222;white-space:pre;left:861.00px;transform:scaleX(0.976);transform-origin:left center;">V00001</div>
<div style="position:absolute;top:499.28px;line-height:17px;font-size:13.0px;color:#222;white-space:pre;left:964.00px;transform:scaleX(0.976);transform-origin:left center;">EUR</div>
<div style="position:absolute;top:499.28px;line-height:17px;font-size:13.0px;color:#222;white-space:pre;right:461.70px;transform:scaleX(0.976);transform-origin:right center;">218,00</div>
<div style="position:absolute;top:499.28px;line-height:17px;font-size:13.0px;color:#222;white-space:pre;right:363.90px;transform:scaleX(0.976);transform-origin:right center;">0,00</div>
<div style="position:absolute;top:499.28px;line-height:17px;font-size:13.0px;color:#222;white-space:pre;right:253.80px;transform:scaleX(0.976);transform-origin:right center;">218,00</div>
<div style="position:absolute;top:499.28px;line-height:17px;font-size:13.0px;color:#222;white-space:pre;right:51.50px;transform:scaleX(0.976);transform-origin:right center;">7523</div>
<div class="ex" style="left:420.5px;top:499.18px;width:15.3px;height:17.8px;border-color:#999"></div>
<div style="position:absolute;top:500.60px;line-height:15px;font-size:11.5px;color:#000;white-space:pre;font-weight:700;left:420.50px;width:15.30px;text-align:center;transform:scaleX(0.976);transform-origin:center center;-webkit-text-stroke:0.55px;">!</div>
<div style="position:absolute;top:521.47px;line-height:17px;font-size:13.0px;color:#222;white-space:pre;left:282.70px;transform:scaleX(0.976);transform-origin:left center;">RG0100010</div>
<div style="position:absolute;top:521.47px;line-height:17px;font-size:13.0px;color:#222;white-space:pre;left:440.00px;transform:scaleX(0.976);transform-origin:left center;">10.07.2001</div>
<div style="position:absolute;top:521.47px;line-height:17px;font-size:13.0px;color:#222;white-space:pre;left:562.90px;transform:scaleX(0.976);transform-origin:left center;">08.09.2001</div>
<div style="position:absolute;top:521.47px;line-height:17px;font-size:13.0px;color:#222;white-space:pre;left:738.80px;transform:scaleX(0.976);transform-origin:left center;">Rechnung</div>
<div style="position:absolute;top:521.47px;line-height:17px;font-size:13.0px;color:#222;white-space:pre;left:861.00px;transform:scaleX(0.976);transform-origin:left center;">V00001</div>
<div style="position:absolute;top:521.47px;line-height:17px;font-size:13.0px;color:#222;white-space:pre;left:964.00px;transform:scaleX(0.976);transform-origin:left center;">EUR</div>
<div style="position:absolute;top:521.47px;line-height:17px;font-size:13.0px;color:#222;white-space:pre;right:461.70px;transform:scaleX(0.976);transform-origin:right center;">436,50</div>
<div style="position:absolute;top:521.47px;line-height:17px;font-size:13.0px;color:#222;white-space:pre;right:363.90px;transform:scaleX(0.976);transform-origin:right center;">0,00</div>
<div style="position:absolute;top:521.47px;line-height:17px;font-size:13.0px;color:#222;white-space:pre;right:253.80px;transform:scaleX(0.976);transform-origin:right center;">436,50</div>
<div style="position:absolute;top:521.47px;line-height:17px;font-size:13.0px;color:#222;white-space:pre;right:51.50px;transform:scaleX(0.976);transform-origin:right center;">7358</div>
<div class="ex" style="left:420.5px;top:521.37px;width:15.3px;height:17.8px;border-color:#999"></div>
<div style="position:absolute;top:522.79px;line-height:15px;font-size:11.5px;color:#000;white-space:pre;font-weight:700;left:420.50px;width:15.30px;text-align:center;transform:scaleX(0.976);transform-origin:center center;-webkit-text-stroke:0.55px;">!</div>
<div style="position:absolute;top:543.66px;line-height:17px;font-size:13.0px;color:#222;white-space:pre;left:282.70px;transform:scaleX(0.976);transform-origin:left center;">RG0200001</div>
<div style="position:absolute;top:543.66px;line-height:17px;font-size:13.0px;color:#222;white-space:pre;left:440.00px;transform:scaleX(0.976);transform-origin:left center;">21.03.2002</div>
<div style="position:absolute;top:543.66px;line-height:17px;font-size:13.0px;color:#222;white-space:pre;left:562.90px;transform:scaleX(0.976);transform-origin:left center;">20.05.2002</div>
<div style="position:absolute;top:543.66px;line-height:17px;font-size:13.0px;color:#222;white-space:pre;left:684.30px;transform:scaleX(0.976);transform-origin:left center;">3</div>
<div style="position:absolute;top:543.66px;line-height:17px;font-size:13.0px;color:#222;white-space:pre;left:738.80px;transform:scaleX(0.976);transform-origin:left center;">Rechnung</div>
<div style="position:absolute;top:543.66px;line-height:17px;font-size:13.0px;color:#222;white-space:pre;left:964.00px;transform:scaleX(0.976);transform-origin:left center;">EUR</div>
<div style="position:absolute;top:543.66px;line-height:17px;font-size:13.0px;color:#222;white-space:pre;right:461.70px;transform:scaleX(0.976);transform-origin:right center;">417,60</div>
<div style="position:absolute;top:543.66px;line-height:17px;font-size:13.0px;color:#222;white-space:pre;right:363.90px;transform:scaleX(0.976);transform-origin:right center;">0,00</div>
<div style="position:absolute;top:543.66px;line-height:17px;font-size:13.0px;color:#222;white-space:pre;right:253.80px;transform:scaleX(0.976);transform-origin:right center;">417,60</div>
<div style="position:absolute;top:543.66px;line-height:17px;font-size:13.0px;color:#222;white-space:pre;right:51.50px;transform:scaleX(0.976);transform-origin:right center;">7104</div>
<div class="ex" style="left:420.5px;top:543.56px;width:15.3px;height:17.8px;border-color:#999"></div>
<div style="position:absolute;top:544.98px;line-height:15px;font-size:11.5px;color:#000;white-space:pre;font-weight:700;left:420.50px;width:15.30px;text-align:center;transform:scaleX(0.976);transform-origin:center center;-webkit-text-stroke:0.55px;">!</div>
<div style="position:absolute;top:565.85px;line-height:17px;font-size:13.0px;color:#222;white-space:pre;left:282.70px;transform:scaleX(0.976);transform-origin:left center;">RG0200004</div>
<div style="position:absolute;top:565.85px;line-height:17px;font-size:13.0px;color:#222;white-space:pre;left:440.00px;transform:scaleX(0.976);transform-origin:left center;">13.09.2002</div>
<div style="position:absolute;top:565.85px;line-height:17px;font-size:13.0px;color:#222;white-space:pre;left:562.90px;transform:scaleX(0.976);transform-origin:left center;">12.11.2002</div>
<div style="position:absolute;top:565.85px;line-height:17px;font-size:13.0px;color:#222;white-space:pre;left:684.30px;transform:scaleX(0.976);transform-origin:left center;">2</div>
<div style="position:absolute;top:565.85px;line-height:17px;font-size:13.0px;color:#222;white-space:pre;left:738.80px;transform:scaleX(0.976);transform-origin:left center;">Rechnung</div>
<div style="position:absolute;top:565.85px;line-height:17px;font-size:13.0px;color:#222;white-space:pre;left:964.00px;transform:scaleX(0.976);transform-origin:left center;">EUR</div>
<div style="position:absolute;top:565.85px;line-height:17px;font-size:13.0px;color:#222;white-space:pre;right:461.70px;transform:scaleX(0.976);transform-origin:right center;">173,90</div>
<div style="position:absolute;top:565.85px;line-height:17px;font-size:13.0px;color:#222;white-space:pre;right:363.90px;transform:scaleX(0.976);transform-origin:right center;">0,00</div>
<div style="position:absolute;top:565.85px;line-height:17px;font-size:13.0px;color:#222;white-space:pre;right:253.80px;transform:scaleX(0.976);transform-origin:right center;">173,90</div>
<div style="position:absolute;top:565.85px;line-height:17px;font-size:13.0px;color:#222;white-space:pre;right:51.50px;transform:scaleX(0.976);transform-origin:right center;">6928</div>
<div class="ex" style="left:420.5px;top:565.75px;width:15.3px;height:17.8px;border-color:#999"></div>
<div style="position:absolute;top:567.17px;line-height:15px;font-size:11.5px;color:#000;white-space:pre;font-weight:700;left:420.50px;width:15.30px;text-align:center;transform:scaleX(0.976);transform-origin:center center;-webkit-text-stroke:0.55px;">!</div>
<div style="position:absolute;top:588.04px;line-height:17px;font-size:13.0px;color:#222;white-space:pre;left:282.70px;transform:scaleX(0.976);transform-origin:left center;">RG0300001</div>
<div style="position:absolute;top:588.04px;line-height:17px;font-size:13.0px;color:#222;white-space:pre;left:440.00px;transform:scaleX(0.976);transform-origin:left center;">01.01.2003</div>
<div style="position:absolute;top:588.04px;line-height:17px;font-size:13.0px;color:#222;white-space:pre;left:562.90px;transform:scaleX(0.976);transform-origin:left center;">02.03.2003</div>
<div style="position:absolute;top:588.04px;line-height:17px;font-size:13.0px;color:#222;white-space:pre;left:684.30px;transform:scaleX(0.976);transform-origin:left center;">3</div>
<div style="position:absolute;top:588.04px;line-height:17px;font-size:13.0px;color:#222;white-space:pre;left:738.80px;transform:scaleX(0.976);transform-origin:left center;">Rechnung</div>
<div style="position:absolute;top:588.04px;line-height:17px;font-size:13.0px;color:#222;white-space:pre;left:861.00px;transform:scaleX(0.976);transform-origin:left center;">V00001</div>
<div style="position:absolute;top:588.04px;line-height:17px;font-size:13.0px;color:#222;white-space:pre;left:964.00px;transform:scaleX(0.976);transform-origin:left center;">EUR</div>
<div style="position:absolute;top:588.04px;line-height:17px;font-size:13.0px;color:#222;white-space:pre;right:461.70px;transform:scaleX(0.976);transform-origin:right center;">20,85</div>
<div style="position:absolute;top:588.04px;line-height:17px;font-size:13.0px;color:#222;white-space:pre;right:363.90px;transform:scaleX(0.976);transform-origin:right center;">0,00</div>
<div style="position:absolute;top:588.04px;line-height:17px;font-size:13.0px;color:#222;white-space:pre;right:253.80px;transform:scaleX(0.976);transform-origin:right center;">20,85</div>
<div style="position:absolute;top:588.04px;line-height:17px;font-size:13.0px;color:#222;white-space:pre;right:51.50px;transform:scaleX(0.976);transform-origin:right center;">6818</div>
<div class="ex" style="left:420.5px;top:587.94px;width:15.3px;height:17.8px;border-color:#999"></div>
<div style="position:absolute;top:589.36px;line-height:15px;font-size:11.5px;color:#000;white-space:pre;font-weight:700;left:420.50px;width:15.30px;text-align:center;transform:scaleX(0.976);transform-origin:center center;-webkit-text-stroke:0.55px;">!</div>
<div style="position:absolute;top:610.23px;line-height:17px;font-size:13.0px;color:#222;white-space:pre;left:282.70px;transform:scaleX(0.976);transform-origin:left center;">RG0300002</div>
<div style="position:absolute;top:610.23px;line-height:17px;font-size:13.0px;color:#222;white-space:pre;left:440.00px;transform:scaleX(0.976);transform-origin:left center;">06.01.2003</div>
<div style="position:absolute;top:610.23px;line-height:17px;font-size:13.0px;color:#222;white-space:pre;left:562.90px;transform:scaleX(0.976);transform-origin:left center;">07.03.2003</div>
<div style="position:absolute;top:610.23px;line-height:17px;font-size:13.0px;color:#222;white-space:pre;left:684.30px;transform:scaleX(0.976);transform-origin:left center;">1</div>
<div style="position:absolute;top:610.23px;line-height:17px;font-size:13.0px;color:#222;white-space:pre;left:738.80px;transform:scaleX(0.976);transform-origin:left center;">Rechnung</div>
<div style="position:absolute;top:610.23px;line-height:17px;font-size:13.0px;color:#222;white-space:pre;left:861.00px;transform:scaleX(0.976);transform-origin:left center;">V00001</div>
<div style="position:absolute;top:610.23px;line-height:17px;font-size:13.0px;color:#222;white-space:pre;left:964.00px;transform:scaleX(0.976);transform-origin:left center;">EUR</div>
<div style="position:absolute;top:610.23px;line-height:17px;font-size:13.0px;color:#222;white-space:pre;right:461.70px;transform:scaleX(0.976);transform-origin:right center;">986,10</div>
<div style="position:absolute;top:610.23px;line-height:17px;font-size:13.0px;color:#222;white-space:pre;right:363.90px;transform:scaleX(0.976);transform-origin:right center;">0,00</div>
<div style="position:absolute;top:610.23px;line-height:17px;font-size:13.0px;color:#222;white-space:pre;right:253.80px;transform:scaleX(0.976);transform-origin:right center;">986,10</div>
<div style="position:absolute;top:610.23px;line-height:17px;font-size:13.0px;color:#222;white-space:pre;right:51.50px;transform:scaleX(0.976);transform-origin:right center;">6813</div>
<div class="ex" style="left:420.5px;top:610.13px;width:15.3px;height:17.8px;border-color:#999"></div>
<div style="position:absolute;top:611.55px;line-height:15px;font-size:11.5px;color:#000;white-space:pre;font-weight:700;left:420.50px;width:15.30px;text-align:center;transform:scaleX(0.976);transform-origin:center center;-webkit-text-stroke:0.55px;">!</div>
<div style="position:absolute;top:632.42px;line-height:17px;font-size:13.0px;color:#222;white-space:pre;left:282.70px;transform:scaleX(0.976);transform-origin:left center;">RG0300004</div>
<div style="position:absolute;top:632.42px;line-height:17px;font-size:13.0px;color:#222;white-space:pre;left:440.00px;transform:scaleX(0.976);transform-origin:left center;">21.01.2003</div>
<div style="position:absolute;top:632.42px;line-height:17px;font-size:13.0px;color:#222;white-space:pre;left:562.90px;transform:scaleX(0.976);transform-origin:left center;">22.03.2003</div>
<div style="position:absolute;top:632.42px;line-height:17px;font-size:13.0px;color:#222;white-space:pre;left:684.30px;transform:scaleX(0.976);transform-origin:left center;">3</div>
<div style="position:absolute;top:632.42px;line-height:17px;font-size:13.0px;color:#222;white-space:pre;left:738.80px;transform:scaleX(0.976);transform-origin:left center;">Rechnung</div>
<div style="position:absolute;top:632.42px;line-height:17px;font-size:13.0px;color:#222;white-space:pre;left:861.00px;transform:scaleX(0.976);transform-origin:left center;">V00001</div>
<div style="position:absolute;top:632.42px;line-height:17px;font-size:13.0px;color:#222;white-space:pre;left:964.00px;transform:scaleX(0.976);transform-origin:left center;">EUR</div>
<div style="position:absolute;top:632.42px;line-height:17px;font-size:13.0px;color:#222;white-space:pre;right:461.70px;transform:scaleX(0.976);transform-origin:right center;">267,00</div>
<div style="position:absolute;top:632.42px;line-height:17px;font-size:13.0px;color:#222;white-space:pre;right:363.90px;transform:scaleX(0.976);transform-origin:right center;">0,00</div>
<div style="position:absolute;top:632.42px;line-height:17px;font-size:13.0px;color:#222;white-space:pre;right:253.80px;transform:scaleX(0.976);transform-origin:right center;">267,00</div>
<div style="position:absolute;top:632.42px;line-height:17px;font-size:13.0px;color:#222;white-space:pre;right:51.50px;transform:scaleX(0.976);transform-origin:right center;">6798</div>
<div class="ex" style="left:420.5px;top:632.32px;width:15.3px;height:17.8px;border-color:#999"></div>
<div style="position:absolute;top:633.74px;line-height:15px;font-size:11.5px;color:#000;white-space:pre;font-weight:700;left:420.50px;width:15.30px;text-align:center;transform:scaleX(0.976);transform-origin:center center;-webkit-text-stroke:0.55px;">!</div>
<div style="position:absolute;top:654.61px;line-height:17px;font-size:13.0px;color:#222;white-space:pre;left:282.70px;transform:scaleX(0.976);transform-origin:left center;">RG0300005</div>
<div style="position:absolute;top:654.61px;line-height:17px;font-size:13.0px;color:#222;white-space:pre;left:440.00px;transform:scaleX(0.976);transform-origin:left center;">23.02.2003</div>
<div style="position:absolute;top:654.61px;line-height:17px;font-size:13.0px;color:#222;white-space:pre;left:562.90px;transform:scaleX(0.976);transform-origin:left center;">24.04.2003</div>
<div style="position:absolute;top:654.61px;line-height:17px;font-size:13.0px;color:#222;white-space:pre;left:684.30px;transform:scaleX(0.976);transform-origin:left center;">1</div>
<div style="position:absolute;top:654.61px;line-height:17px;font-size:13.0px;color:#222;white-space:pre;left:738.80px;transform:scaleX(0.976);transform-origin:left center;">Rechnung</div>
<div style="position:absolute;top:654.61px;line-height:17px;font-size:13.0px;color:#222;white-space:pre;left:861.00px;transform:scaleX(0.976);transform-origin:left center;">V00001</div>
<div style="position:absolute;top:654.61px;line-height:17px;font-size:13.0px;color:#222;white-space:pre;left:964.00px;transform:scaleX(0.976);transform-origin:left center;">EUR</div>
<div style="position:absolute;top:654.61px;line-height:17px;font-size:13.0px;color:#222;white-space:pre;right:461.70px;transform:scaleX(0.976);transform-origin:right center;">399,00</div>
<div style="position:absolute;top:654.61px;line-height:17px;font-size:13.0px;color:#222;white-space:pre;right:363.90px;transform:scaleX(0.976);transform-origin:right center;">0,00</div>
<div style="position:absolute;top:654.61px;line-height:17px;font-size:13.0px;color:#222;white-space:pre;right:253.80px;transform:scaleX(0.976);transform-origin:right center;">399,00</div>
<div style="position:absolute;top:654.61px;line-height:17px;font-size:13.0px;color:#222;white-space:pre;right:51.50px;transform:scaleX(0.976);transform-origin:right center;">6765</div>
<div class="ex" style="left:420.5px;top:654.51px;width:15.3px;height:17.8px;border-color:#999"></div>
<div style="position:absolute;top:655.93px;line-height:15px;font-size:11.5px;color:#000;white-space:pre;font-weight:700;left:420.50px;width:15.30px;text-align:center;transform:scaleX(0.976);transform-origin:center center;-webkit-text-stroke:0.55px;">!</div>
<div style="position:absolute;top:676.80px;line-height:17px;font-size:13.0px;color:#222;white-space:pre;left:282.70px;transform:scaleX(0.976);transform-origin:left center;">RG0300006</div>
<div style="position:absolute;top:676.80px;line-height:17px;font-size:13.0px;color:#222;white-space:pre;left:440.00px;transform:scaleX(0.976);transform-origin:left center;">19.02.2003</div>
<div style="position:absolute;top:676.80px;line-height:17px;font-size:13.0px;color:#222;white-space:pre;left:562.90px;transform:scaleX(0.976);transform-origin:left center;">20.04.2003</div>
<div style="position:absolute;top:676.80px;line-height:17px;font-size:13.0px;color:#222;white-space:pre;left:684.30px;transform:scaleX(0.976);transform-origin:left center;">2</div>
<div style="position:absolute;top:676.80px;line-height:17px;font-size:13.0px;color:#222;white-space:pre;left:738.80px;transform:scaleX(0.976);transform-origin:left center;">Rechnung</div>
<div style="position:absolute;top:676.80px;line-height:17px;font-size:13.0px;color:#222;white-space:pre;left:964.00px;transform:scaleX(0.976);transform-origin:left center;">EUR</div>
<div style="position:absolute;top:676.80px;line-height:17px;font-size:13.0px;color:#222;white-space:pre;right:461.70px;transform:scaleX(0.976);transform-origin:right center;">999,00</div>
<div style="position:absolute;top:676.80px;line-height:17px;font-size:13.0px;color:#222;white-space:pre;right:363.90px;transform:scaleX(0.976);transform-origin:right center;">0,00</div>
<div style="position:absolute;top:676.80px;line-height:17px;font-size:13.0px;color:#222;white-space:pre;right:253.80px;transform:scaleX(0.976);transform-origin:right center;">999,00</div>
<div style="position:absolute;top:676.80px;line-height:17px;font-size:13.0px;color:#222;white-space:pre;right:51.50px;transform:scaleX(0.976);transform-origin:right center;">6769</div>
<div class="ex" style="left:420.5px;top:676.70px;width:15.3px;height:17.8px;border-color:#999"></div>
<div style="position:absolute;top:678.12px;line-height:15px;font-size:11.5px;color:#000;white-space:pre;font-weight:700;left:420.50px;width:15.30px;text-align:center;transform:scaleX(0.976);transform-origin:center center;-webkit-text-stroke:0.55px;">!</div>
<div style="position:absolute;top:698.99px;line-height:17px;font-size:13.0px;color:#222;white-space:pre;left:282.70px;transform:scaleX(0.976);transform-origin:left center;">RG0300008</div>
<div style="position:absolute;top:698.99px;line-height:17px;font-size:13.0px;color:#222;white-space:pre;left:440.00px;transform:scaleX(0.976);transform-origin:left center;">22.02.2003</div>
<div style="position:absolute;top:698.99px;line-height:17px;font-size:13.0px;color:#222;white-space:pre;left:562.90px;transform:scaleX(0.976);transform-origin:left center;">25.02.2003</div>
<div style="position:absolute;top:698.99px;line-height:17px;font-size:13.0px;color:#222;white-space:pre;left:684.30px;transform:scaleX(0.976);transform-origin:left center;">1</div>
<div style="position:absolute;top:698.99px;line-height:17px;font-size:13.0px;color:#222;white-space:pre;left:738.80px;transform:scaleX(0.976);transform-origin:left center;">Rechnung</div>
<div style="position:absolute;top:698.99px;line-height:17px;font-size:13.0px;color:#222;white-space:pre;left:861.00px;transform:scaleX(0.976);transform-origin:left center;">V00001</div>
<div style="position:absolute;top:698.99px;line-height:17px;font-size:13.0px;color:#222;white-space:pre;left:964.00px;transform:scaleX(0.976);transform-origin:left center;">EUR</div>
<div style="position:absolute;top:698.99px;line-height:17px;font-size:13.0px;color:#222;white-space:pre;right:461.70px;transform:scaleX(0.976);transform-origin:right center;">417,60</div>
<div style="position:absolute;top:698.99px;line-height:17px;font-size:13.0px;color:#222;white-space:pre;right:363.90px;transform:scaleX(0.976);transform-origin:right center;">0,00</div>
<div style="position:absolute;top:698.99px;line-height:17px;font-size:13.0px;color:#222;white-space:pre;right:253.80px;transform:scaleX(0.976);transform-origin:right center;">417,60</div>
<div style="position:absolute;top:698.99px;line-height:17px;font-size:13.0px;color:#222;white-space:pre;right:51.50px;transform:scaleX(0.976);transform-origin:right center;">6823</div>
<div class="ex" style="left:420.5px;top:698.89px;width:15.3px;height:17.8px;border-color:#999"></div>
<div style="position:absolute;top:700.31px;line-height:15px;font-size:11.5px;color:#000;white-space:pre;font-weight:700;left:420.50px;width:15.30px;text-align:center;transform:scaleX(0.976);transform-origin:center center;-webkit-text-stroke:0.55px;">!</div>
<div style="position:absolute;top:721.18px;line-height:17px;font-size:13.0px;color:#222;white-space:pre;left:282.70px;transform:scaleX(0.976);transform-origin:left center;">RG0300010</div>
<div style="position:absolute;top:721.18px;line-height:17px;font-size:13.0px;color:#222;white-space:pre;left:440.00px;transform:scaleX(0.976);transform-origin:left center;">25.06.2003</div>
<div style="position:absolute;top:721.18px;line-height:17px;font-size:13.0px;color:#222;white-space:pre;left:562.90px;transform:scaleX(0.976);transform-origin:left center;">24.08.2003</div>
<div style="position:absolute;top:721.18px;line-height:17px;font-size:13.0px;color:#222;white-space:pre;left:684.30px;transform:scaleX(0.976);transform-origin:left center;">1</div>
<div style="position:absolute;top:721.18px;line-height:17px;font-size:13.0px;color:#222;white-space:pre;left:738.80px;transform:scaleX(0.976);transform-origin:left center;">Rechnung</div>
<div style="position:absolute;top:721.18px;line-height:17px;font-size:13.0px;color:#222;white-space:pre;left:861.00px;transform:scaleX(0.976);transform-origin:left center;">V00001</div>
<div style="position:absolute;top:721.18px;line-height:17px;font-size:13.0px;color:#222;white-space:pre;left:964.00px;transform:scaleX(0.976);transform-origin:left center;">EUR</div>
<div style="position:absolute;top:721.18px;line-height:17px;font-size:13.0px;color:#222;white-space:pre;right:461.70px;transform:scaleX(0.976);transform-origin:right center;">37,69</div>
<div style="position:absolute;top:721.18px;line-height:17px;font-size:13.0px;color:#222;white-space:pre;right:363.90px;transform:scaleX(0.976);transform-origin:right center;">0,00</div>
<div style="position:absolute;top:721.18px;line-height:17px;font-size:13.0px;color:#222;white-space:pre;right:253.80px;transform:scaleX(0.976);transform-origin:right center;">37,69</div>
<div style="position:absolute;top:721.18px;line-height:17px;font-size:13.0px;color:#222;white-space:pre;right:51.50px;transform:scaleX(0.976);transform-origin:right center;">6643</div>
<div class="ex" style="left:420.5px;top:721.08px;width:15.3px;height:17.8px;border-color:#999"></div>
<div style="position:absolute;top:722.50px;line-height:15px;font-size:11.5px;color:#000;white-space:pre;font-weight:700;left:420.50px;width:15.30px;text-align:center;transform:scaleX(0.976);transform-origin:center center;-webkit-text-stroke:0.55px;">!</div>
<div style="position:absolute;top:743.37px;line-height:17px;font-size:13.0px;color:#222;white-space:pre;left:282.70px;transform:scaleX(0.976);transform-origin:left center;">RG0300011</div>
<div style="position:absolute;top:743.37px;line-height:17px;font-size:13.0px;color:#222;white-space:pre;left:440.00px;transform:scaleX(0.976);transform-origin:left center;">14.07.2003</div>
<div style="position:absolute;top:743.37px;line-height:17px;font-size:13.0px;color:#222;white-space:pre;left:562.90px;transform:scaleX(0.976);transform-origin:left center;">12.09.2003</div>
<div style="position:absolute;top:743.37px;line-height:17px;font-size:13.0px;color:#222;white-space:pre;left:738.80px;transform:scaleX(0.976);transform-origin:left center;">Rechnung</div>
<div style="position:absolute;top:743.37px;line-height:17px;font-size:13.0px;color:#222;white-space:pre;left:861.00px;transform:scaleX(0.976);transform-origin:left center;">V00001</div>
<div style="position:absolute;top:743.37px;line-height:17px;font-size:13.0px;color:#222;white-space:pre;left:964.00px;transform:scaleX(0.976);transform-origin:left center;">EUR</div>
<div style="position:absolute;top:743.37px;line-height:17px;font-size:13.0px;color:#222;white-space:pre;right:461.70px;transform:scaleX(0.976);transform-origin:right center;">223,50</div>
<div style="position:absolute;top:743.37px;line-height:17px;font-size:13.0px;color:#222;white-space:pre;right:363.90px;transform:scaleX(0.976);transform-origin:right center;">0,00</div>
<div style="position:absolute;top:743.37px;line-height:17px;font-size:13.0px;color:#222;white-space:pre;right:253.80px;transform:scaleX(0.976);transform-origin:right center;">223,50</div>
<div style="position:absolute;top:743.37px;line-height:17px;font-size:13.0px;color:#222;white-space:pre;right:51.50px;transform:scaleX(0.976);transform-origin:right center;">6624</div>
<div class="ex" style="left:420.5px;top:743.27px;width:15.3px;height:17.8px;border-color:#999"></div>
<div style="position:absolute;top:744.69px;line-height:15px;font-size:11.5px;color:#000;white-space:pre;font-weight:700;left:420.50px;width:15.30px;text-align:center;transform:scaleX(0.976);transform-origin:center center;-webkit-text-stroke:0.55px;">!</div>
<div style="position:absolute;top:765.56px;line-height:17px;font-size:13.0px;color:#222;white-space:pre;left:282.70px;transform:scaleX(0.976);transform-origin:left center;">RG0400002</div>
<div style="position:absolute;top:765.56px;line-height:17px;font-size:13.0px;color:#222;white-space:pre;left:440.00px;transform:scaleX(0.976);transform-origin:left center;">15.01.2004</div>
<div style="position:absolute;top:765.56px;line-height:17px;font-size:13.0px;color:#222;white-space:pre;left:562.90px;transform:scaleX(0.976);transform-origin:left center;">15.03.2004</div>
<div style="position:absolute;top:765.56px;line-height:17px;font-size:13.0px;color:#222;white-space:pre;left:738.80px;transform:scaleX(0.976);transform-origin:left center;">Rechnung</div>
<div style="position:absolute;top:765.56px;line-height:17px;font-size:13.0px;color:#222;white-space:pre;left:861.00px;transform:scaleX(0.976);transform-origin:left center;">V00001</div>
<div style="position:absolute;top:765.56px;line-height:17px;font-size:13.0px;color:#222;white-space:pre;left:964.00px;transform:scaleX(0.976);transform-origin:left center;">EUR</div>
<div style="position:absolute;top:765.56px;line-height:17px;font-size:13.0px;color:#222;white-space:pre;right:461.70px;transform:scaleX(0.976);transform-origin:right center;">25,60</div>
<div style="position:absolute;top:765.56px;line-height:17px;font-size:13.0px;color:#222;white-space:pre;right:363.90px;transform:scaleX(0.976);transform-origin:right center;">0,00</div>
<div style="position:absolute;top:765.56px;line-height:17px;font-size:13.0px;color:#222;white-space:pre;right:253.80px;transform:scaleX(0.976);transform-origin:right center;">25,60</div>
<div style="position:absolute;top:765.56px;line-height:17px;font-size:13.0px;color:#222;white-space:pre;right:51.50px;transform:scaleX(0.976);transform-origin:right center;">6439</div>
<div class="ex" style="left:420.5px;top:765.46px;width:15.3px;height:17.8px;border-color:#999"></div>
<div style="position:absolute;top:766.88px;line-height:15px;font-size:11.5px;color:#000;white-space:pre;font-weight:700;left:420.50px;width:15.30px;text-align:center;transform:scaleX(0.976);transform-origin:center center;-webkit-text-stroke:0.55px;">!</div>
<div style="position:absolute;top:787.75px;line-height:17px;font-size:13.0px;color:#1a1a1a;white-space:pre;font-weight:700;right:643.40px;transform:scaleX(0.976);transform-origin:right center;">Summe</div>
<div style="position:absolute;top:787.75px;line-height:17px;font-size:13.0px;color:#1a1a1a;white-space:pre;font-weight:700;left:964.00px;transform:scaleX(0.976);transform-origin:left center;">EUR</div>
<div style="position:absolute;top:787.75px;line-height:17px;font-size:13.0px;color:#1a1a1a;white-space:pre;font-weight:700;right:461.70px;transform:scaleX(0.976);transform-origin:right center;">33.598,12</div>
<div style="position:absolute;top:787.75px;line-height:17px;font-size:13.0px;color:#1a1a1a;white-space:pre;font-weight:700;right:363.90px;transform:scaleX(0.976);transform-origin:right center;">2.577,75</div>
<div style="position:absolute;top:787.75px;line-height:17px;font-size:13.0px;color:#1a1a1a;white-space:pre;font-weight:700;right:253.80px;transform:scaleX(0.976);transform-origin:right center;">31.020,37</div>
<div style="position:absolute;left:1555.80px;top:480.20px;width:12.20px;height:287.80px;box-sizing:border-box;background:linear-gradient(90deg,#d6d6d6,#eaeaea 45%,#dcdcdc);border-radius:6.1px;"></div>
<div class="bbtn" style="left:1460.3px;top:821px;width:106px;height:29.4px;line-height:29.4px;border-radius:4px"><span class="sx">Schließen</span></div>
</div></body></html>
